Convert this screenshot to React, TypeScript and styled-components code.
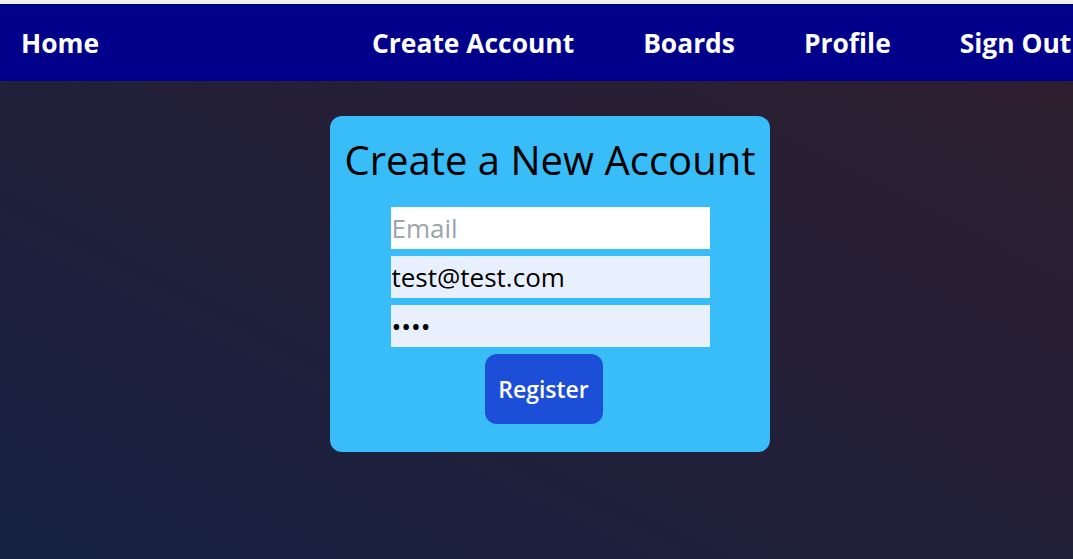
import React from "react";
import styled, { createGlobalStyle } from "styled-components";

const GlobalStyle = createGlobalStyle`
  html, body {
    margin: 0;
    padding: 0;
    background: #f0f0f0;
  }
  body {
    font-family: "Open Sans", "Noto Sans", sans-serif;
    overflow: hidden;
  }
`;

const Page = styled.div`
  margin-top: 4px;
  width: 1100px;
  height: 555px;
  display: flex;
  flex-direction: column;
  background: linear-gradient(to top right, #162142, #301e2e);
`;

const NavBar = styled.nav`
  height: 77px;
  flex-shrink: 0;
  background: #00008b;
  display: flex;
  align-items: center;
  padding-left: 21px;
  white-space: nowrap;
  overflow: hidden;
`;

const NavLink = styled.a`
  color: #ffffff;
  font-size: 26.4px;
  font-weight: 700;
  text-decoration: none;
  cursor: pointer;
`;

const NavGroup = styled.div`
  display: flex;
  gap: 69px;
  margin-left: 273px;
`;

const Main = styled.main`
  display: flex;
  justify-content: center;
  padding-top: 35px;
`;

const Card = styled.section`
  width: 440px;
  box-sizing: border-box;
  background: #38bdf8;
  border-radius: 12px;
  display: flex;
  flex-direction: column;
  align-items: center;
  padding: 20px 0 28px;
`;

const Title = styled.h1`
  margin: 0 0 23px;
  font-size: 40px;
  font-weight: 400;
  color: #000000;
  line-height: 1.2;
`;

const Form = styled.form`
  display: flex;
  flex-direction: column;
  align-items: center;
  gap: 7px;
`;

const Field = styled.input<{ $filled?: boolean }>`
  width: 319px;
  height: 42px;
  box-sizing: border-box;
  border: none;
  outline: none;
  padding: 0 1px;
  font-family: inherit;
  font-size: 26px;
  color: #000000;
  background: ${(p) => (p.$filled ? "#e8f0fe" : "#ffffff")};

  &::placeholder {
    color: #9ca3af;
  }
`;

const Button = styled.button`
  width: 118px;
  height: 70px;
  margin-right: 13px;
  border: none;
  border-radius: 12px;
  background: #1d4ed8;
  color: #ffffff;
  font-family: inherit;
  font-size: 23px;
  font-weight: 600;
  cursor: pointer;
`;

export default function App() {
  return (
    <>
      <GlobalStyle />
      <Page>
        <NavBar>
          <NavLink>Home</NavLink>
          <NavGroup>
            <NavLink>Create Account</NavLink>
            <NavLink>Boards</NavLink>
            <NavLink>Profile</NavLink>
            <NavLink>Sign Out</NavLink>
          </NavGroup>
        </NavBar>
        <Main>
          <Card>
            <Title>Create a New Account</Title>
            <Form onSubmit={(e) => e.preventDefault()}>
              <Field type="text" placeholder="Email" />
              <Field type="email" $filled defaultValue="test@test.com" />
              <Field type="password" $filled defaultValue="test" />
              <Button type="submit">Register</Button>
            </Form>
          </Card>
        </Main>
      </Page>
    </>
  );
}
